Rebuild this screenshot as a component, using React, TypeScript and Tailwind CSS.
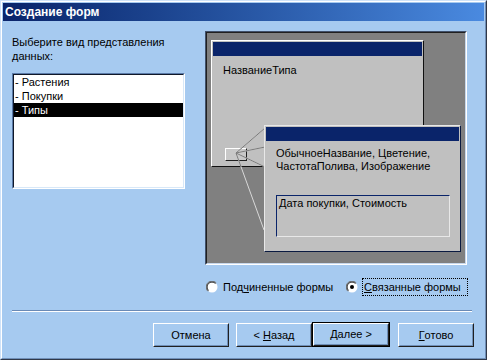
import React from "react";

const FONT = { fontFamily: '"Liberation Sans", Arial, sans-serif' };

function Radio({ checked }: { checked?: boolean }) {
  return (
    <svg width="12" height="12" viewBox="0 0 12 12" className="shrink-0">
      <circle cx="6" cy="6" r="5.5" fill="#ffffff" />
      <path d="M10.2 1.8 A5.5 5.5 0 0 0 1.8 10.2" stroke="#6f6f6f" strokeWidth="1" fill="none" />
      <path d="M9.5 2.5 A4.6 4.6 0 0 0 2.5 9.5" stroke="#202020" strokeWidth="1" fill="none" />
      {checked && <circle cx="6" cy="6" r="2" fill="#000" />}
    </svg>
  );
}

function Btn({ children, def }: { children: React.ReactNode; def?: boolean }) {
  const inner = (
    <div className="h-full w-full border border-t-white border-l-white border-r-[#202020] border-b-[#202020]">
      <div className="h-full w-full border border-t-transparent border-l-transparent border-r-[#6f8fb8] border-b-[#6f8fb8] flex items-center justify-center text-[11px] text-black">
        {children}
      </div>
    </div>
  );
  if (def)
    return <div className="w-[78px] h-[25px] border border-black -mt-px">{inner}</div>;
  return <div className="w-[76px] h-[24px]">{inner}</div>;
}

export default function App() {
  return (
    <div
      className="w-[487px] h-[360px] bg-[#a6caf0] border border-t-[#cfe2f8] border-l-[#cfe2f8] border-r-[#303848] border-b-[#303848]"
      style={FONT}
    >
      <div className="h-full w-full border border-t-white border-l-white border-r-[#6f8fb8] border-b-[#6f8fb8] p-px flex flex-col">
        {/* Title bar */}
        <div className="h-[18px] shrink-0 flex items-center pl-[2px] bg-gradient-to-r from-[#0a246a] to-[#4a8ae0] text-white font-bold text-[12px]">
          Создание форм
        </div>

        {/* Body */}
        <div className="flex mt-[10px]">
          <div className="ml-[9px] w-[173px] flex flex-col">
            <div className="mt-[4px] text-[11px] leading-[14px] text-black">
              Выберите вид представления
              <br />
              данных:
            </div>
            <div className="mt-[10px] h-[116px] border border-t-[#5a7aa8] border-l-[#5a7aa8] border-r-white border-b-white">
              <div className="h-full border border-t-[#101828] border-l-[#101828] border-r-[#d8e8f8] border-b-[#d8e8f8] bg-white text-[11px] text-black">
                <div className="h-[14px] leading-[14px] pl-px">- Растения</div>
                <div className="h-[14px] leading-[14px] pl-px">- Покупки</div>
                <div className="h-[14px] leading-[14px] pl-px bg-black text-white">- Типы</div>
              </div>
            </div>
          </div>

          {/* Preview */}
          <div className="ml-[20px] w-[262px] h-[234px] border border-t-[#40506a] border-l-[#40506a] border-r-white border-b-white">
            <div className="relative h-full w-full border border-t-[#202020] border-l-[#202020] border-r-[#c8d8ec] border-b-[#c8d8ec] bg-[#808080] overflow-hidden">
              {/* Form 1 */}
              <div className="absolute left-[4px] top-[7px] w-[213px] h-[127px] border border-t-white border-l-white border-r-[#101010] border-b-[#101010] bg-[#c0c0c0] p-px">
                <div className="h-[14px] bg-[#0a246a]" />
                <div className="pl-[10px] mt-[7px] text-[11px] leading-[14px] text-black">НазваниеТипа</div>
                <div className="absolute left-[13px] top-[107px] w-[22px] h-[13px] border border-t-white border-l-white border-r-[#202020] border-b-[#202020] bg-[#c8c8c8]" />
              </div>

              {/* Link lines */}
              <svg className="absolute left-0 top-0" width="258" height="230" viewBox="0 0 258 230">
                <defs>
                  <clipPath id="f1">
                    <rect x="4" y="7" width="213" height="127" />
                  </clipPath>
                </defs>
                <g stroke="#d8d8d8" strokeWidth="1" fill="none">
                  <line x1="29" y1="120" x2="58" y2="95" />
                  <line x1="29" y1="120" x2="58" y2="114" />
                  <line x1="29" y1="120" x2="58" y2="134" />
                  <line x1="29" y1="120" x2="57" y2="197" />
                </g>
                <g stroke="#7a7a7a" strokeWidth="1" fill="none" clipPath="url(#f1)">
                  <line x1="29" y1="120" x2="58" y2="95" />
                  <line x1="29" y1="120" x2="58" y2="114" />
                  <line x1="29" y1="120" x2="58" y2="134" />
                  <line x1="29" y1="120" x2="57" y2="197" />
                </g>
              </svg>

              {/* Form 2 */}
              <div className="absolute left-[57px] top-[92px] w-[197px] h-[127px] border border-t-[#e8e8e8] border-l-[#e8e8e8] border-r-[#0a1a40] border-b-[#0a1a40] bg-[#c0c0c0] p-px">
                <div className="h-[14px] bg-[#0a246a]" />
                <div className="pl-[10px] mt-[6px] text-[11px] leading-[13px] text-black">
                  ОбычноеНазвание, Цветение,
                  <br />
                  ЧастотаПолива, Изображение
                </div>
                <div className="ml-[10px] mt-[22px] w-[174px] h-[42px] border border-t-[#0a246a] border-l-[#0a246a] border-r-[#e8e8e8] border-b-[#e8e8e8] pl-[2px] pt-px text-[11px] leading-[13px] text-black">
                  Дата покупки, Стоимость
                </div>
              </div>
            </div>
          </div>
        </div>

        {/* Radios */}
        <div className="flex items-center h-[20px] mt-[12px] ml-[203px] text-[11px] text-black">
          <div className="w-[140px] flex items-center">
            <Radio />
            <span className="ml-[5px]">
              Под<span className="underline">ч</span>иненные формы
            </span>
          </div>
          <Radio checked />
          <div className="ml-[4px] w-[106px] h-[18px] border border-dotted border-black flex items-center pl-px">
            <span>
              <span className="underline">С</span>вязанные формы
            </span>
          </div>
        </div>

        {/* Separator */}
        <div className="mt-[13px] ml-[9px] mr-[12px] border-t border-t-[#6a8ab6] border-b border-b-white" />

        {/* Buttons */}
        <div className="flex mt-[11px] pl-[150px]">
          <Btn>Отмена</Btn>
          <div className="ml-[7px]">
            <Btn>
              &lt; <span className="underline ml-[3px]">Н</span>азад
            </Btn>
          </div>
          <Btn def>
            <span className="underline">Д</span>алее &gt;
          </Btn>
          <div className="ml-[8px]">
            <Btn>
              <span className="underline">Г</span>отово
            </Btn>
          </div>
        </div>
      </div>
    </div>
  );
}
